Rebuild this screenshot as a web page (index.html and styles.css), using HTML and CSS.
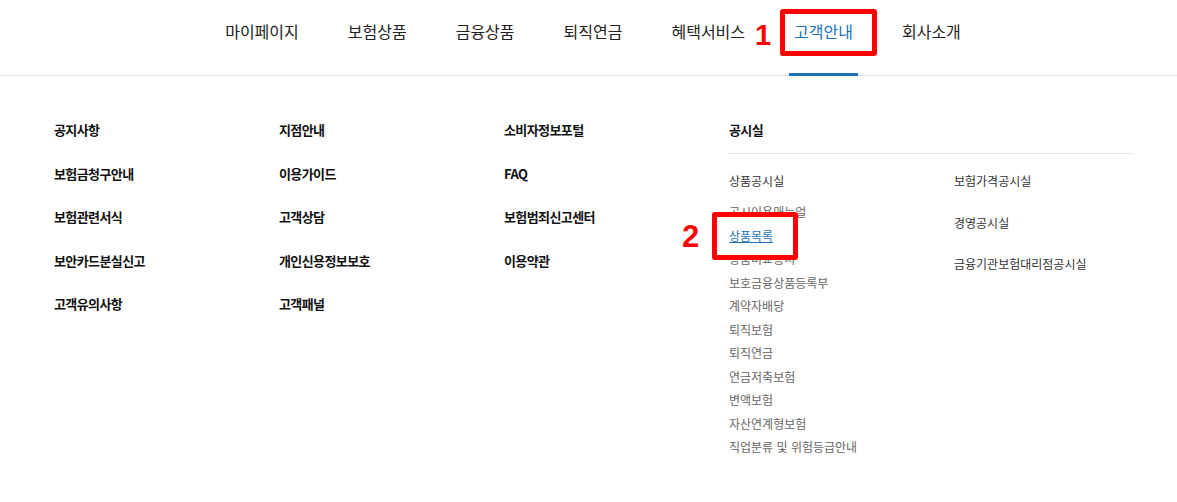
FILE: index.html
```html
<!DOCTYPE html>
<html lang="ko">
<head>
    <meta charset="UTF-8">
    <title>고객안내</title>
    <link rel="stylesheet" href="styles.css">
</head>
<body>
    <header class="gnb">
        <nav class="gnb-menu">
            <a href="#" class="gnb-item">마이페이지</a>
            <a href="#" class="gnb-item">보험상품</a>
            <a href="#" class="gnb-item">금융상품</a>
            <a href="#" class="gnb-item">퇴직연금</a>
            <a href="#" class="gnb-item">혜택서비스</a>
            <a href="#" class="gnb-item active">고객안내</a>
            <a href="#" class="gnb-item">회사소개</a>
        </nav>
        <span class="mark-num mark-num-1">1</span>
        <span class="mark-box mark-box-1"></span>
    </header>

    <div class="mega">
        <ul class="mega-col">
            <li><a href="#">공지사항</a></li>
            <li><a href="#">보험금청구안내</a></li>
            <li><a href="#">보험관련서식</a></li>
            <li><a href="#">보안카드분실신고</a></li>
            <li><a href="#">고객유의사항</a></li>
        </ul>
        <ul class="mega-col">
            <li><a href="#">지점안내</a></li>
            <li><a href="#">이용가이드</a></li>
            <li><a href="#">고객상담</a></li>
            <li><a href="#">개인신용정보보호</a></li>
            <li><a href="#">고객패널</a></li>
        </ul>
        <ul class="mega-col">
            <li><a href="#">소비자정보포털</a></li>
            <li><a href="#">FAQ</a></li>
            <li><a href="#">보험범죄신고센터</a></li>
            <li><a href="#">이용약관</a></li>
        </ul>
        <div class="disclosure">
            <h3 class="disclosure-title">공시실</h3>
            <div class="disclosure-body">
                <div class="sub-col">
                    <a href="#" class="sub-head">상품공시실</a>
                    <ul class="sub-list">
                        <li><a href="#">공시이용매뉴얼</a></li>
                        <li><a href="#" class="current">상품목록</a></li>
                        <li><a href="#">상품비교공시</a></li>
                        <li><a href="#">보호금융상품등록부</a></li>
                        <li><a href="#">계약자배당</a></li>
                        <li><a href="#">퇴직보험</a></li>
                        <li><a href="#">퇴직연금</a></li>
                        <li><a href="#">연금저축보험</a></li>
                        <li><a href="#">변액보험</a></li>
                        <li><a href="#">자산연계형보험</a></li>
                        <li><a href="#">직업분류 및 위험등급안내</a></li>
                    </ul>
                    <span class="mark-num mark-num-2">2</span>
                    <span class="mark-box mark-box-2"></span>
                </div>
                <ul class="sub-col side-list">
                    <li><a href="#">보험가격공시실</a></li>
                    <li><a href="#">경영공시실</a></li>
                    <li><a href="#">금융기관보험대리점공시실</a></li>
                </ul>
            </div>
        </div>
    </div>
</body>
</html>
```

FILE: styles.css
```css
* {
    margin: 0;
    padding: 0;
    box-sizing: border-box;
}

body {
    background: #fff;
    color: #222;
    font-family: 'Noto Sans CJK KR', 'Noto Sans', sans-serif;
}

a {
    color: inherit;
    text-decoration: none;
}

ul {
    list-style: none;
}

/* top menu */
.gnb {
    position: relative;
    height: 76px;
    border-bottom: 1px solid #e8e8e8;
}

.gnb-menu {
    display: flex;
    justify-content: center;
    gap: 39px;
    padding-left: 9px;
}

.gnb-item {
    height: 76px;
    margin-bottom: -1px;
    padding: 19px 5px 0;
    border-bottom: 3px solid transparent;
    font-size: 16px;
    line-height: 24px;
    color: #222;
}

.gnb-item.active {
    color: #1b72b8;
    border-bottom-color: #1b72b8;
}

/* annotation marks */
.mark-box {
    position: absolute;
    border: 5px solid #f00;
    border-radius: 3px;
}

.mark-num {
    position: absolute;
    color: #f00;
    font-family: 'Liberation Sans', Arial, sans-serif;
    font-weight: bold;
    line-height: 1;
}

.mark-box-1 {
    left: 780px;
    top: 9px;
    width: 97px;
    height: 47px;
}

.mark-num-1 {
    left: 755px;
    top: 21px;
    font-size: 29px;
}

.mark-box-2 {
    left: -17px;
    top: 43px;
    width: 86px;
    height: 48px;
    background: #fff;
    z-index: 1;
}

.mark-num-2 {
    left: -47px;
    top: 52px;
    font-size: 31px;
}

/* mega menu */
.mega {
    display: grid;
    grid-template-columns: 225px 225px 225px 404px;
    padding: 44px 0 0 54px;
}

.mega-col {
    display: flex;
    flex-direction: column;
    gap: 23.5px;
}

.mega-col a,
.disclosure-title {
    display: block;
    font-size: 13px;
    font-weight: bold;
    line-height: 20px;
    letter-spacing: -0.6px;
    color: #111;
}

.disclosure-title {
    padding-bottom: 13px;
    border-bottom: 1px solid #e4e4e4;
}

.disclosure-body {
    display: grid;
    grid-template-columns: 225px 1fr;
    padding-top: 15px;
}

.sub-col {
    position: relative;
}

.sub-head,
.sub-list a,
.side-list a {
    display: block;
    width: max-content;
    font-size: 12px;
    line-height: 23.5px;
    color: #333;
}

.sub-list {
    margin-top: 7.5px;
}

.sub-list a {
    color: #666;
}

.sub-list a.current {
    position: relative;
    z-index: 2;
    color: #1b72b8;
    text-decoration: underline;
}

.side-list {
    display: flex;
    flex-direction: column;
    gap: 18px;
}
```
